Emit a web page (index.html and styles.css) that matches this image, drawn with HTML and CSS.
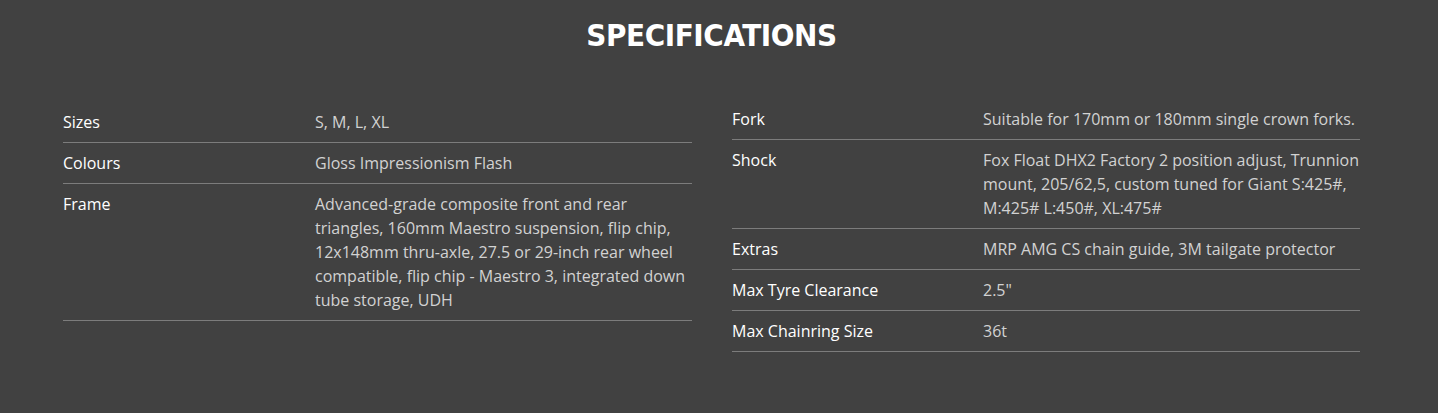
FILE: index.html
```html
<!DOCTYPE html>
<html>
<head>
<meta charset="utf-8">
<link rel="stylesheet" href="styles.css">
</head>
<body>
<section class="specs">
  <h2 class="title">SPECIFICATIONS</h2>
  <div class="cols">
    <div class="table left">
      <div class="row"><div class="label">Sizes</div><div class="value">S, M, L, XL</div></div>
      <div class="row"><div class="label">Colours</div><div class="value">Gloss Impressionism Flash</div></div>
      <div class="row"><div class="label">Frame</div><div class="value">Advanced-grade composite front and rear triangles, 160mm Maestro suspension, flip chip, 12x148mm thru-axle, 27.5 or 29-inch rear wheel compatible, flip chip - Maestro 3, integrated down tube storage, UDH</div></div>
    </div>
    <div class="table right">
      <div class="row"><div class="label">Fork</div><div class="value">Suitable for 170mm or 180mm single crown forks.</div></div>
      <div class="row"><div class="label">Shock</div><div class="value">Fox Float DHX2 Factory 2 position adjust, Trunnion mount, 205/62,5, custom tuned for Giant S:425#, M:425# L:450#, XL:475#</div></div>
      <div class="row"><div class="label">Extras</div><div class="value">MRP AMG CS chain guide, 3M tailgate protector</div></div>
      <div class="row"><div class="label">Max Tyre Clearance</div><div class="value">2.5"</div></div>
      <div class="row"><div class="label">Max Chainring Size</div><div class="value">36t</div></div>
    </div>
  </div>
</section>
</body>
</html>
```

FILE: styles.css
```css
html, body {
  margin: 0;
  padding: 0;
  background: #414141;
}
.specs {
  width: 1438px;
  height: 413px;
  box-sizing: border-box;
  padding: 16px 78px 0 63px;
  font-family: "Open Sans", "Liberation Sans", sans-serif;
}
.title {
  margin: 0;
  text-align: center;
  color: #ffffff;
  font-family: "DejaVu Sans Condensed", "DejaVu Sans", sans-serif;
  font-weight: bold;
  font-size: 31px;
  line-height: 38px;
  letter-spacing: -0.4px;
}
.cols {
  display: grid;
  grid-template-columns: 629px 628px;
  column-gap: 40px;
  margin-top: 45px;
}
.left {
  padding-top: 3px;
}
.row {
  display: grid;
  grid-template-columns: 252px 1fr;
  padding: 8px 0 8px;
  border-bottom: 1px solid #7c7c7c;
  font-size: 16px;
  line-height: 24px;
}
.right .row {
  grid-template-columns: 251px 1fr;
}
.label {
  color: #ffffff;
}
.value {
  color: #d2d2d2;
}
.right .value {
  margin-right: -6px;
}
```
